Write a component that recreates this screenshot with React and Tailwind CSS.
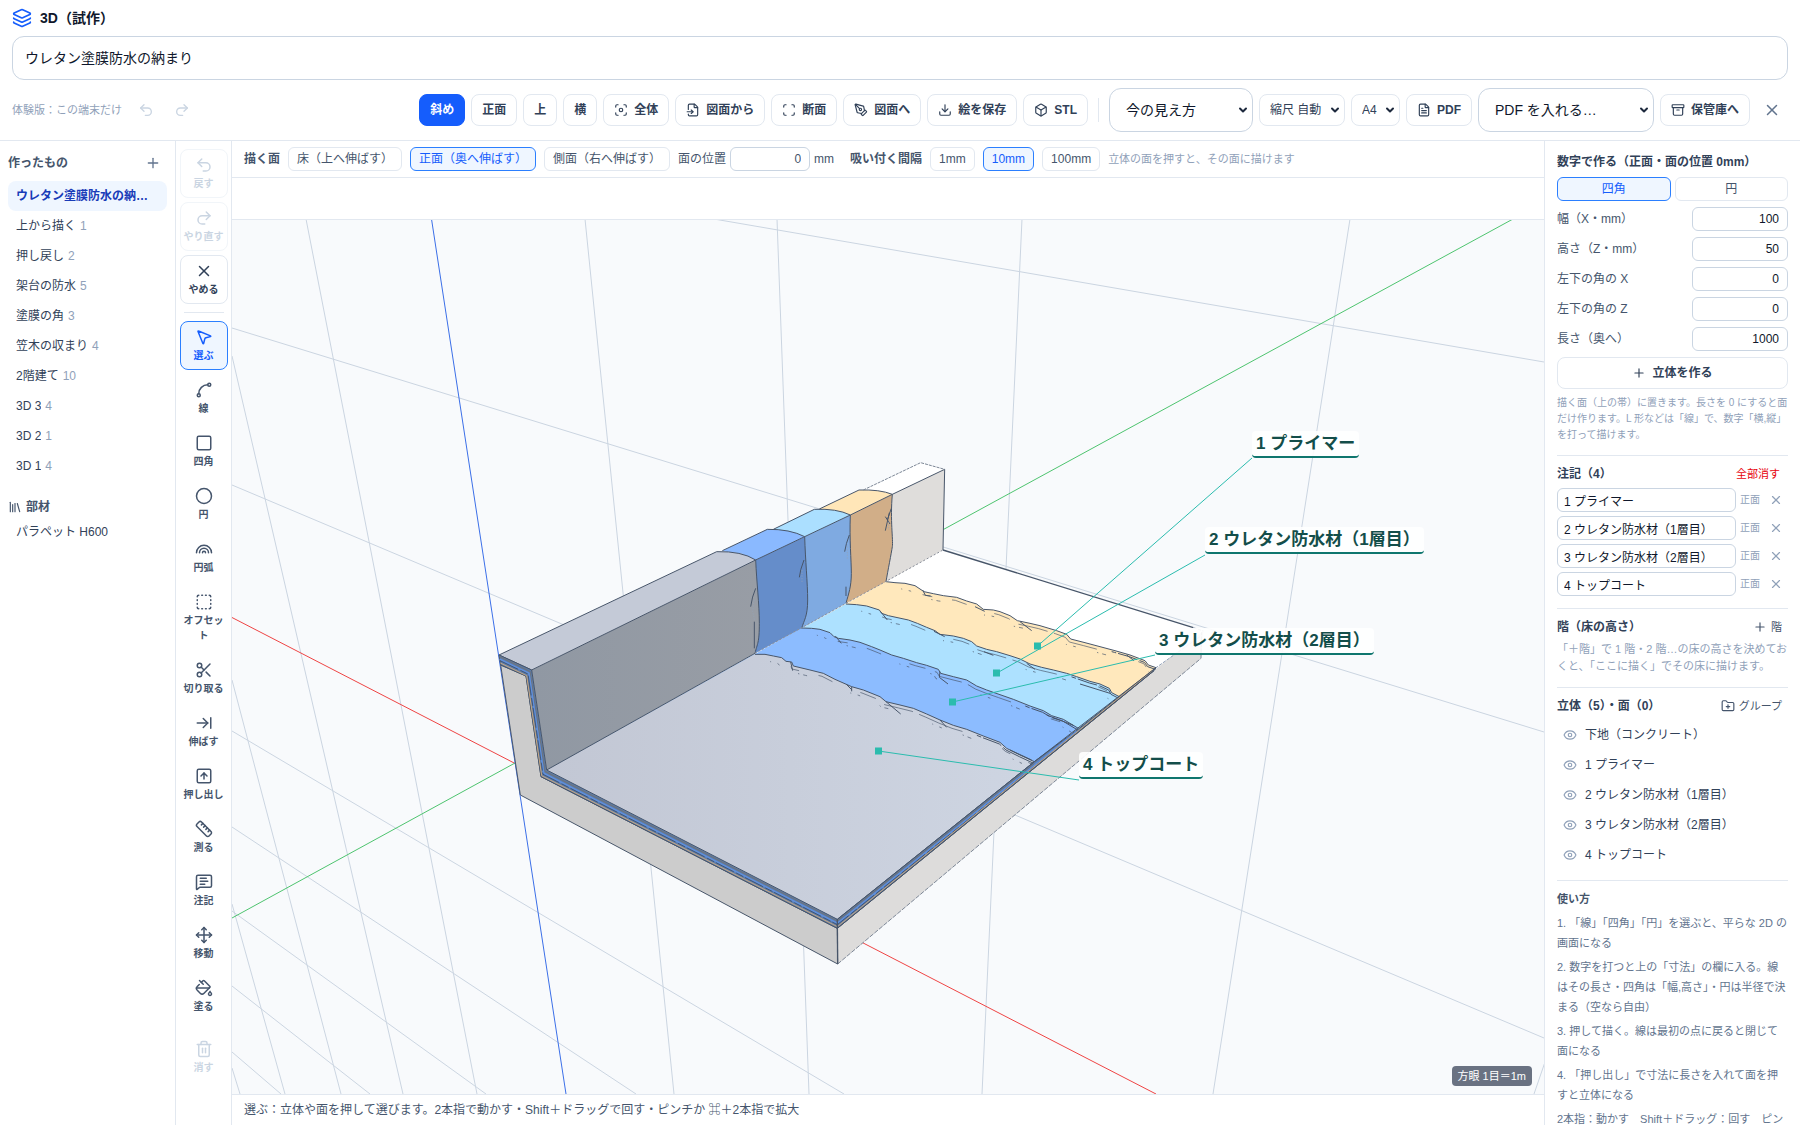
import React, { useState } from "react";
import {
  Archive, ArrowRightToLine, Box, ChevronDown, Circle, Download, Eye, FileInput, FileText, Focus,
  FolderPlus, Layers, Library, MessageSquareText, MousePointer2, Move, PaintBucket, PenTool, Plus,
  Rainbow, Redo2, Ruler, Scan, Scissors, Spline, Square, SquareArrowUp, SquareDashed, Trash2, Undo2, X,
} from "lucide-react";

const models = [
  { name: "ウレタン塗膜防水の納まり", count: 5 },
  { name: "上から描く", count: 1 },
  { name: "押し戻し", count: 2 },
  { name: "架台の防水", count: 5 },
  { name: "塗膜の角", count: 3 },
  { name: "笠木の収まり", count: 4 },
  { name: "2階建て", count: 10 },
  { name: "3D 3", count: 4 },
  { name: "3D 2", count: 1 },
  { name: "3D 1", count: 4 },
];

const tools = [
  { label: "選ぶ", icon: MousePointer2 },
  { label: "線", icon: Spline },
  { label: "四角", icon: Square },
  { label: "円", icon: Circle },
  { label: "円弧", icon: Rainbow },
  { label: "オフセット", icon: SquareDashed },
  { label: "切り取る", icon: Scissors },
  { label: "伸ばす", icon: ArrowRightToLine },
  { label: "押し出し", icon: SquareArrowUp },
  { label: "測る", icon: Ruler },
  { label: "注記", icon: MessageSquareText },
  { label: "移動", icon: Move },
  { label: "塗る", icon: PaintBucket },
];

const views = ["斜め", "正面", "上", "横"];

const actions = [
  { label: "全体", icon: Focus },
  { label: "図面から", icon: FileInput },
  { label: "断面", icon: Scan },
  { label: "図面へ", icon: PenTool },
  { label: "絵を保存", icon: Download },
  { label: "STL", icon: Box },
];

const planes = ["床（上へ伸ばす）", "正面（奥へ伸ばす）", "側面（右へ伸ばす）"];
const snaps = ["1mm", "10mm", "100mm"];

const sizes = [
  { id: "width", label: "幅（X・mm）", value: "100" },
  { id: "height", label: "高さ（Z・mm）", value: "50" },
  { id: "cornerX", label: "左下の角の X", value: "0" },
  { id: "cornerZ", label: "左下の角の Z", value: "0" },
  { id: "depth", label: "長さ（奥へ）", value: "1000" },
];

const notes = ["1 プライマー", "2 ウレタン防水材（1層目）", "3 ウレタン防水材（2層目）", "4 トップコート"];
const solids = ["下地（コンクリート）", ...notes];

const help = [
  "1. 「線」「四角」「円」を選ぶと、平らな 2D の画面になる",
  "2. 数字を打つと上の「寸法」の欄に入る。線はその長さ・四角は「幅,高さ」・円は半径で決まる（空なら自由）",
  "3. 押して描く。線は最初の点に戻ると閉じて面になる",
  "4. 「押し出し」で寸法に長さを入れて面を押すと立体になる",
  "2本指：動かす　Shift＋ドラッグ：回す　ピンチ：拡大",
];

const gridLines = [
  [306, 219, 477, 1094], [585, 219, 674, 1094], [777, 219, 809, 1094], [1022, 219, 982, 1094],
  [1350, 219, 1213, 1094], [232, 356, 403, 1094], [232, 680, 341, 1094], [232, 904, 285, 1094],
  [232, 1068, 240, 1094], [1545, 1062, 1534, 1094],
  [714, 219, 1544, 362], [232, 328, 1544, 732], [232, 485, 1544, 1038], [232, 731, 844, 1094],
  [232, 827, 636, 1094], [232, 911, 486, 1094], [232, 986, 370, 1094], [232, 1052, 281, 1094],
];

// torn edges of the coating layers on the floor
const edgePrimer =
  "318,125 345,128 375,130 405,137 420,147 432,155 460,161 490,167 530,172 560,183 590,192 610,208 640,210 660,215 690,227 712,242 750,250 780,257 830,272 860,283 872,297 915,308 960,320 1005,332 1050,345 1095,362 1105,375 1128,383";
const edgeFirst =
  "198,192 230,194 260,198 298,210 305,220 325,227 385,240 412,250 440,262 465,272 480,283 520,288 550,295 575,305 590,318 620,328 650,335 690,347 720,357 750,372 785,382 820,390 860,400 890,410 930,424 960,432 988,445 995,458 1018,470";
const edgeSecond =
  "65,264 95,265 120,268 150,278 162,290 175,295 210,300 240,307 275,320 300,330 335,345 370,355 410,368 440,376 475,388 482,400 520,410 560,420 590,438 620,450 660,464 700,478 750,498 790,512 815,527 850,538 895,565";
const edgeTop =
  "-75,343 -45,343 -20,348 5,353 18,364 35,366 40,378 90,390 130,400 165,418 215,440 250,450 300,470 318,485 360,495 400,505 440,522 480,540 520,556 560,568 610,588 660,607 680,625 720,645 763,665";

const edges = [edgePrimer, edgeFirst, edgeSecond, edgeTop];

function Button({ icon: Icon, children, active }) {
  return (
    <button
      className={`flex h-8 shrink-0 items-center justify-center gap-1.5 rounded-lg border px-2.5 text-xs font-bold 
      ${active ? "border-blue-600 bg-blue-600 text-white" : "border-slate-200 bg-white text-slate-700"}`}
    >
      {Icon && <Icon size={14} />}
      {children}
    </button>
  );
}

function Chip({ children, active, className = "", onClick }) {
  return (
    <button
      onClick={onClick}
      className={`h-6 shrink-0 rounded-md border px-2 text-xs leading-4 ${className} 
      ${active ? "border-blue-500 bg-blue-50 text-blue-600" : "border-slate-200 bg-white text-slate-600"}`}
    >
      {children}
    </button>
  );
}

function Select({ label, options, large, className }) {
  return (
    <div className={`relative shrink-0 ${className}`}>
      <select
        aria-label={label}
        className={`w-full appearance-none border bg-white 
        ${large ? "h-11 rounded-xl border-slate-300 px-4 text-sm text-slate-900" : "h-8 rounded-lg border-slate-200 px-2.5 text-xs text-slate-700"}`}
      >
        {options.map((o) => (
          <option key={o}>{o}</option>
        ))}
      </select>
      <ChevronDown
        size={12}
        strokeWidth={4}
        className="pointer-events-none absolute top-1/2 right-1 -translate-y-1/2 text-slate-800"
      />
    </div>
  );
}

function Tool({ icon: Icon, label, state = "plain" }) {
  const styles = {
    plain: "border-transparent text-slate-600",
    outline: "border-slate-200 text-slate-700",
    active: "border-blue-500 bg-blue-50 text-blue-600",
    disabled: "border-slate-100 text-slate-300",
    ghost: "border-transparent text-slate-300",
  };
  return (
    <button
      disabled={state === "disabled" || state === "ghost"}
      className={`flex w-12 shrink-0 flex-col items-center gap-0.5 rounded-lg border py-1.5 text-[10px] leading-[15px] font-bold ${styles[state]}`}
    >
      <Icon size={18} />
      <span className="max-w-10 text-center break-all">{label}</span>
    </button>
  );
}

function Header() {
  return (
    <header className="flex shrink-0 flex-col gap-2 border-b border-slate-200 px-3 py-2">
      <div className="flex h-5 items-center gap-2 text-sm font-bold text-slate-900">
        <Layers size={20} className="text-blue-600" />
        <h1>3D（試作）</h1>
      </div>
      <input
        aria-label="名前"
        defaultValue="ウレタン塗膜防水の納まり"
        className="h-11 w-full rounded-xl border border-slate-300 px-3 pb-0.5 text-sm text-slate-900"
      />
      <div className="flex h-11 items-center">
        <span className="text-[11px] text-slate-400">体験版：この端末だけ</span>
        <button aria-label="戻す" disabled className="ml-2 flex size-8 items-center justify-center text-slate-300">
          <Undo2 size={16} />
        </button>
        <button aria-label="やり直す" disabled className="ml-1 flex size-8 items-center justify-center text-slate-300">
          <Redo2 size={16} />
        </button>
        <div className="ml-auto flex items-center gap-1.5">
          {views.map((v) => (
            <Button key={v} active={v === "斜め"}>{v}</Button>
          ))}
          {actions.map((a) => (
            <Button key={a.label} icon={a.icon}>{a.label}</Button>
          ))}
          <div className="mx-1 h-6 w-px bg-slate-200" />
          <Select large label="見え方" options={["今の見え方"]} className="w-36" />
          <Select label="縮尺" options={["縮尺 自動"]} className="w-[86px]" />
          <Select label="用紙" options={["A4"]} className="w-[49px]" />
          <Button icon={FileText}>PDF</Button>
          <Select large label="PDF の入れ先" options={["PDF を入れる…"]} className="w-44" />
          <Button icon={Archive}>保管庫へ</Button>
          <button aria-label="閉じる" className="flex size-8 items-center justify-center text-slate-500">
            <X size={18} />
          </button>
        </div>
      </div>
    </header>
  );
}

function ModelList() {
  const [current, setCurrent] = useState(0);
  return (
    <aside className="w-44 shrink-0 overflow-hidden border-r border-slate-200 p-2 text-xs text-slate-700">
      <div className="mb-1 flex h-7 items-center justify-between">
        <h2 className="font-bold text-slate-600">作ったもの</h2>
        <button aria-label="追加" className="flex size-7 items-center justify-center text-slate-500">
          <Plus size={16} />
        </button>
      </div>
      {models.map((m, i) => (
        <button
          key={m.name}
          onClick={() => setCurrent(i)}
          className={`flex h-[30px] w-full items-center gap-1 rounded-lg px-2 text-left 
          ${i === current ? "bg-blue-50 font-bold text-blue-800" : ""}`}
        >
          <span className="truncate">{m.name}</span>
          {i !== current && <span className="text-slate-400">{m.count}</span>}
        </button>
      ))}
      <h2 className="mt-4 flex h-5 items-center gap-1 font-bold text-slate-600">
        <Library size={14} />
        部材
      </h2>
      <button className="flex h-[30px] w-full items-center px-2">パラペット H600</button>
    </aside>
  );
}

function Toolbar() {
  return (
    <nav className="flex w-14 shrink-0 flex-col items-center gap-1 overflow-hidden border-r border-slate-200 pt-2">
      <Tool icon={Undo2} label="戻す" state="disabled" />
      <Tool icon={Redo2} label="やり直す" state="disabled" />
      <Tool icon={X} label="やめる" state="outline" />
      <div className="my-1 h-px w-10 shrink-0 bg-slate-200" />
      {tools.map((t, i) => (
        <Tool key={t.label} {...t} state={i === 0 ? "active" : "plain"} />
      ))}
      <div className="h-1 shrink-0" />
      <Tool icon={Trash2} label="消す" state="ghost" />
    </nav>
  );
}

function Scene() {
  return (
    <svg
      viewBox="232 220 1312 874"
      preserveAspectRatio="xMinYMin slice"
      className="absolute inset-0 h-full w-full"
      fill="none"
      aria-hidden="true"
    >
      <defs>
        <linearGradient id="floor" x1="0" y1="0" x2="1" y2="0">
          <stop offset="0" stopColor="#c2c7d4" />
          <stop offset="1" stopColor="#ced5e2" />
        </linearGradient>
        <linearGradient id="wall" x1="0" y1="0" x2="1" y2="0">
          <stop offset="0" stopColor="#9098a3" />
          <stop offset="1" stopColor="#989da5" />
        </linearGradient>
      </defs>

      <g stroke="#cbd5e1">
        {gridLines.map(([x1, y1, x2, y2]) => (
          <line key={`${x1}-${y1}-${x2}`} x1={x1} y1={y1} x2={x2} y2={y2} />
        ))}
      </g>
      <path d="M232 617.5 1156 1094" stroke="#ef4444" />
      <path d="M232 918 515 763 1513 219" stroke="#4ec46f" />
      <path d="M431.500 219 566 1094" stroke="#3b6fe8" />

      {/* solid model, drawn at three units to the pixel */}
      <g transform="translate(780 540) scale(0.33333)" stroke="#475569" strokeWidth="3" strokeLinejoin="round">
        {/* concrete */}
        <path d="M172 1160 173 1272 1263 355 1270 272Z" fill="#dddcdb" stroke="none" />
        <path d="M173 1272 1263 355 1265 275" strokeDasharray="14 4" stroke="#7c8796" />
        <path d="M-838 375-779 765 173 1272 172 1165-717 710-762 408Z" fill="#ccc" />
        <path d="M489 30 1240 262 1270 272 1128 383 318 125Z" fill="#fff" stroke="none" />
        <path d="M489 30 1240 263" strokeWidth="4" />
        <path d="M1240 263 1270 273M1260 290 1128 383" stroke="#94a3b8" strokeDasharray="10 4" />

        {/* floor coats */}
        <path d={`M${edgePrimer} 172,1138 -700,690Z`} fill="#ffe8bc" stroke="none" />
        <path d={`M${edgeFirst} 172,1138 -700,690Z`} fill="#ade1ff" stroke="none" />
        <path d={`M${edgeSecond} 172,1138 -700,690Z`} fill="#8cbcff" stroke="none" />
        <path d={`M${edgeTop} 172,1138 -700,690Z`} fill="url(#floor)" stroke="none" />
        {edges.map((e) => (
          <g key={e}>
            <polyline points={e} />
            <polyline points={e} transform="translate(-4 9)" strokeWidth="2" strokeDasharray="0 120 30 60 46 90 50 30 90 20 140 10" />
            <polyline points={e} transform="translate(-14 16)" strokeWidth="2" strokeDasharray="0 60 3 20 8 66 4 12 12 80" />
            <polyline points={e} transform="translate(-2 5)" strokeWidth="3" strokeDasharray="0 720 14 6 60 8 120 200" />
          </g>
        ))}
        {/* loose flecks beside the tears */}
        <path
          d="M428 150 436 166 452 168M585 200 614 214M720 245 755 272M302 215 322 240M462 274 494 290M612 335 640 346M740 370 765 388M166 288 184 310M480 395 478 412 504 432M32 366 38 392M198 432 216 450M215 440 215 454M318 485 362 522M480 540 500 562M900 432 990 460M1040 345 1062 362M690 630 755 660M800 525 880 556"
          strokeWidth="3"
        />

        {/* wall faces */}
        <g stroke="none">
          <path d="M337-137 494-212 489 30 318 125Z" fill="#dfdddb" />
          <path d="M211-75 337-137C330-60 340 0 337 20S324 90 318 125L198 190Z" fill="#d1ae88" />
          <path d="M74-10 211-75C208 0 214 60 214 100S206 160 198 190L65 265Z" fill="#7faae1" />
          <path d="M-73 60 74-10C76 60 83 130 83 180S72 240 65 265L-75 340Z" fill="#658dca" />
          <path d="M-745 390-73 60C-70 130-62 190-62 250S-68 310-75 340L-700 690Z" fill="url(#wall)" />
          <path d="M250-150 422-232 494-212 337-137Z" fill="#fff" />
          <path d="M118-93 237-150Q300-152 337-137L211-75Z" fill="#ffe6b8" />
          <path d="M-20-32 103-92Q170-95 211-75L74-10Z" fill="#abdfff" />
          <path d="M-173 32-38-32Q30-33 74-10L-73 60Z" fill="#8ab9ff" />
          <path d="M-843 345-190 35Q-115 33-73 60L-745 390Z" fill="#c4cad7" />
        </g>
        <path d="M-843 345-190 35Q-115 33-73 60L-745 390Z" />
        <path d="M-173 32-38-32Q30-33 74-10L-73 60M-20-32 103-92Q170-95 211-75L74-10M118-93 237-150Q300-152 337-137L211-75" />
        <path d="M337-137 494-212 489 30" />
        <path d="M250-150 422-232 494-212" stroke="#7c8796" strokeDasharray="9 3" />
        <path d="M-700 690-75 340M337-137C330-60 340 0 337 20S324 90 318 125M211-75C208 0 214 60 214 100S206 160 198 190M74-10C76 60 83 130 83 180S72 240 65 265M-73 60C-70 130-62 190-62 250S-68 310-75 340" />
        <path d="M-75 340 489 30" stroke="#8a8f9a" strokeDasharray="6 6" />
        <path d="M-77 245V325M-73 145Q-84 170-88 200M72 60Q60 90 58 112M208-15Q198 10 194 35M328-82 316-28M322-60 334-95M316-70 330-48M198 140V168" />
        <path d="M-78 180-82 215-76 240M66 90V130M202 20V60M326-55V-30" stroke="#94a3b8" strokeWidth="2" strokeDasharray="4 4" />

        {/* coat thickness on the cut face */}
        <path d="M-843 345-745 390-700 690 172 1138 172 1165-717 710-762 408-838 375Z" fill="#5d7dab" />
        <path d="M172 1138 763 665 895 567 1018 470 1128 383 1122 392 172 1165Z" fill="#5d7dab" />
        <path d="M-841 350-750 395-705 694 172 1143 763 671" stroke="#6b7480" strokeWidth="4" />
        <path d="M-841 358-753 400-709 700 172 1150 890 574" stroke="#5f8fdc" strokeWidth="5" />
        <path d="M-840 362-756 402-711 703 172 1154 1010 482" stroke="#334155" strokeWidth="2" strokeDasharray="60 8 24 6" />
        <path d="M-839 369-760 407-715 707 172 1160 1120 390" stroke="#c9a77c" strokeWidth="3" />
        <path d="M172 1138 763 665 1128 383M172 1165 1122 392" />
        <path d="M172 1138 173 1272" strokeWidth="4" />
      </g>

      {/* leader lines */}
      <g stroke="#2bbcae">
        <path d="M1037.500 646 1252 458M997 673 1205 555M952.500 702 1155 655M878.500 751 1079 780" />
      </g>
      <g fill="#2bbcae">
        <rect x="1034" y="642.500" width="7" height="7" />
        <rect x="993" y="669.500" width="7" height="7" />
        <rect x="949" y="698.500" width="7" height="7" />
        <rect x="875" y="747.500" width="7" height="7" />
      </g>
    </svg>
  );
}

const callout =
  "absolute rounded border-b-2 border-[#0f766e] bg-white/90 px-1 text-[17px] leading-[25px] font-bold whitespace-nowrap text-[#134e4a]";

function Workspace() {
  const [plane, setPlane] = useState(1);
  const [snap, setSnap] = useState(1);
  return (
    <main className="flex min-w-0 flex-1 flex-col text-xs text-slate-600">
      <div className="flex shrink-0 items-center gap-2 overflow-hidden border-b border-slate-200 px-3 py-1.5 whitespace-nowrap">
        <span className="font-bold">描く面</span>
        {planes.map((p, i) => (
          <Chip key={p} active={i === plane} onClick={() => setPlane(i)}>{p}</Chip>
        ))}
        <label className="flex items-center gap-1">
          面の位置
          <input defaultValue="0" className="h-6 w-20 rounded-md border border-slate-300 px-2 text-right" />
          mm
        </label>
        <span className="ml-2 font-bold">吸い付く間隔</span>
        {snaps.map((s, i) => (
          <Chip key={s} active={i === snap} onClick={() => setSnap(i)}>{s}</Chip>
        ))}
        <span className="text-[11px] text-slate-400">立体の面を押すと、その面に描けます</span>
      </div>
      <div className="h-[42px] shrink-0 border-b border-slate-200" />
      <div className="relative flex-1 overflow-hidden bg-slate-50">
        <Scene />
        <div className={`${callout} top-[211px] left-[1020px]`}>{notes[0]}</div>
        <div className={`${callout} top-[307px] left-[973px]`}>{notes[1]}</div>
        <div className={`${callout} top-[408px] left-[923px]`}>{notes[2]}</div>
        <div className={`${callout} top-[532px] left-[847px]`}>{notes[3]}</div>
        <div className="absolute right-3 bottom-2 rounded bg-gray-500 px-1.5 text-[11px] leading-5 text-white">
          方眼 1目＝1m
        </div>
      </div>
      <div className="h-[31px] shrink-0 truncate border-t border-slate-200 px-3 leading-[30px]">
        選ぶ：立体や面を押して選びます。2本指で動かす・Shift＋ドラッグで回す・ピンチか ⌘＋2本指で拡大
      </div>
    </main>
  );
}

function Inspector() {
  const [shape, setShape] = useState("四角");
  return (
    <aside className="w-64 shrink-0 overflow-x-hidden overflow-y-auto border-l border-slate-200 px-3 text-xs text-slate-600 [scrollbar-width:none]">
      <section className="flex flex-col gap-1.5 border-b border-slate-200 pt-3 pb-3">
        <h2 className="leading-[18px] font-bold text-slate-700">数字で作る（正面・面の位置 0mm）</h2>
        <div className="grid grid-cols-2 gap-1">
          {["四角", "円"].map((s) => (
            <Chip key={s} active={s === shape} onClick={() => setShape(s)}>{s}</Chip>
          ))}
        </div>
        {sizes.map((s) => (
          <div key={s.id} className="flex items-center justify-between">
            <label htmlFor={s.id}>{s.label}</label>
            <input
              id={s.id}
              defaultValue={s.value}
              className="h-6 w-24 rounded-md border border-slate-300 px-2 text-right text-slate-900"
            />
          </div>
        ))}
        <Button icon={Plus}>立体を作る</Button>
        <p className="text-[10px] leading-4 text-slate-400">
          描く面（上の帯）に置きます。長さを 0 にすると面だけ作ります。L 形などは「線」で、数字「横,縦」を打って描けます。
        </p>
      </section>

      <section className="border-b border-slate-200 pt-2 pb-3">
        <div className="mb-1 flex h-5 items-center justify-between">
          <h2 className="font-bold text-slate-700">注記（4）</h2>
          <button className="px-2 text-[11px] text-red-600">全部消す</button>
        </div>
        <div className="flex flex-col gap-1">
          {notes.map((n) => (
            <div key={n} className="flex items-center gap-1">
              <input
                aria-label="注記"
                defaultValue={n}
                className="h-6 min-w-0 flex-1 rounded-md border border-slate-300 px-1.5 text-slate-900"
              />
              <span className="text-[10px] text-slate-400">正面</span>
              <button aria-label="消す" className="flex size-6 items-center justify-center text-slate-400">
                <X size={14} />
              </button>
            </div>
          ))}
        </div>
      </section>

      <section className="border-b border-slate-200 pt-2 pb-3">
        <div className="mb-1 flex h-5 items-center justify-between">
          <h2 className="font-bold text-slate-700">階（床の高さ）</h2>
          <button className="flex items-center gap-1 px-1.5 text-[11px]">
            <Plus size={14} />階
          </button>
        </div>
        <p className="text-[11px] leading-[17px] text-slate-400">
          「＋階」で 1 階・2 階…の床の高さを決めておくと、「ここに描く」でその床に描けます。
        </p>
      </section>

      <section className="border-b border-slate-200 pt-2 pb-2.5">
        <div className="mb-1 flex h-5 items-center justify-between">
          <h2 className="font-bold text-slate-700">立体（5）・面（0）</h2>
          <button className="flex items-center gap-1 px-1.5 text-[11px]">
            <FolderPlus size={14} />
            グループ
          </button>
        </div>
        {solids.map((s) => (
          <div key={s} className="flex h-[30px] items-center gap-2 px-1.5">
            <button aria-label="表示" className="text-slate-400">
              <Eye size={14} />
            </button>
            <span className="text-slate-700">{s}</span>
          </div>
        ))}
      </section>

      <section className="flex flex-col gap-1 pt-2 pb-3 text-[11px] leading-5 text-slate-500">
        <h2 className="font-bold text-slate-600">使い方</h2>
        {help.map((h) => (
          <p key={h}>{h}</p>
        ))}
      </section>
    </aside>
  );
}

export default function App() {
  return (
    <div
      lang="ja"
      className="flex h-screen flex-col overflow-hidden bg-white font-['Liberation_Sans','Noto_Sans_CJK_JP',sans-serif]"
    >
      <Header />
      <div className="flex min-h-0 flex-1">
        <ModelList />
        <Toolbar />
        <Workspace />
        <Inspector />
      </div>
    </div>
  );
}
